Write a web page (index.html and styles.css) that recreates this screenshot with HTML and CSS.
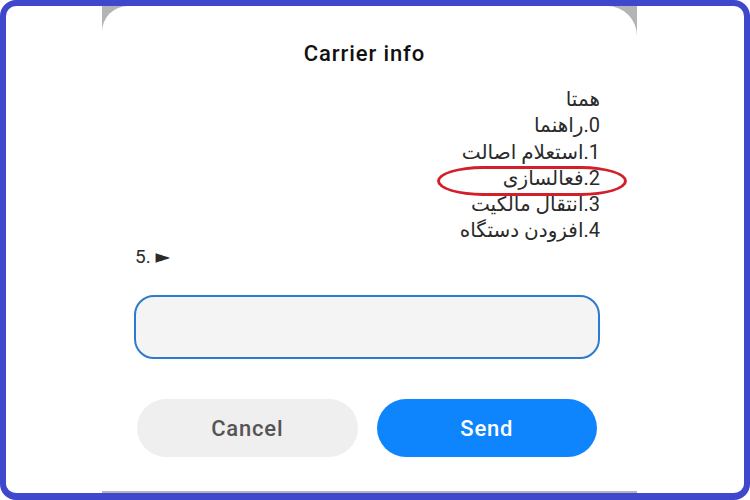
FILE: index.html
```html
<!DOCTYPE html>
<html lang="en">
<head>
<meta charset="utf-8">
<title>Carrier info</title>
<link rel="stylesheet" href="styles.css">
</head>
<body>
<div class="frame">
  <div class="backdrop">
    <div class="card">
      <h1 class="title">Carrier info</h1>
      <div class="menu">
        <p class="line rtl" dir="rtl">همتا</p>
        <p class="line rtl" dir="rtl">0.راهنما</p>
        <p class="line rtl" dir="rtl">1.استعلام اصالت</p>
        <p class="line rtl" dir="rtl">2.فعالسازی</p>
        <p class="line rtl" dir="rtl">3.انتقال مالکیت</p>
        <p class="line rtl" dir="rtl">4.افزودن دستگاه</p>
        <p class="line ltr" dir="ltr">5. ►</p>
      </div>
      <div class="input"></div>
      <div class="actions">
        <button class="btn cancel">Cancel</button>
        <button class="btn send">Send</button>
      </div>
      <span class="mark"></span>
    </div>
  </div>
</div>
</body>
</html>
```

FILE: styles.css
```css
html, body {
  margin: 0;
  padding: 0;
  background: #ffffff;
}
.frame {
  box-sizing: border-box;
  width: 750px;
  height: 500px;
  border: 6px solid #3f48cc;
  border-bottom-width: 7px;
  border-radius: 16px;
  background: #ffffff;
  overflow: hidden;
}
.backdrop {
  margin-left: 96px;
  width: 535px;
  height: 100%;
  background: #b4b4b4;
  display: flex;
  flex-direction: column;
}
.card {
  position: relative;
  flex: 1;
  margin-bottom: 2px;
  background: #ffffff;
  border-radius: 26px 30px 0 0;
  padding: 0 37px 0 33px;
  display: flex;
  flex-direction: column;
}
.title {
  margin: 34px 0 0;
  font-family: Roboto, "Liberation Sans", sans-serif;
  font-weight: 500;
  font-size: 22px;
  letter-spacing: 0.9px;
  line-height: 28px;
  color: #111111;
  text-align: center;
  padding-right: 6px;
}
.menu {
  margin-top: 18px;
  display: flex;
  flex-direction: column;
}
.line {
  margin: 0;
  font-family: Roboto, "DejaVu Sans", sans-serif;
  font-size: 20px;
  line-height: 26.3px;
  color: #2a2a2a;
}
.rtl { text-align: right; }
.ltr { text-align: left; font-size: 19px; }
.input {
  margin-top: 25px;
  margin-left: -1px;
  height: 60px;
  border: 2px solid #2b7ccf;
  border-radius: 20px;
  background: #f4f4f4;
}
.actions {
  margin-top: 40px;
  display: flex;
  gap: 19px;
  padding: 0 3px 0 2px;
}
.btn {
  flex: 1;
  height: 58px;
  border: none;
  border-radius: 29px;
  font-family: Roboto, "Liberation Sans", sans-serif;
  font-weight: 500;
  font-size: 22px;
  letter-spacing: 0.8px;
}
.cancel {
  background: #efefef;
  color: #555555;
}
.send {
  background: #0e85fd;
  color: #ffffff;
}
.mark {
  position: absolute;
  left: 335px;
  top: 160px;
  width: 190px;
  height: 30px;
  box-sizing: border-box;
  border: 3px solid #d2202a;
  border-radius: 46px / 15px;
}
```
